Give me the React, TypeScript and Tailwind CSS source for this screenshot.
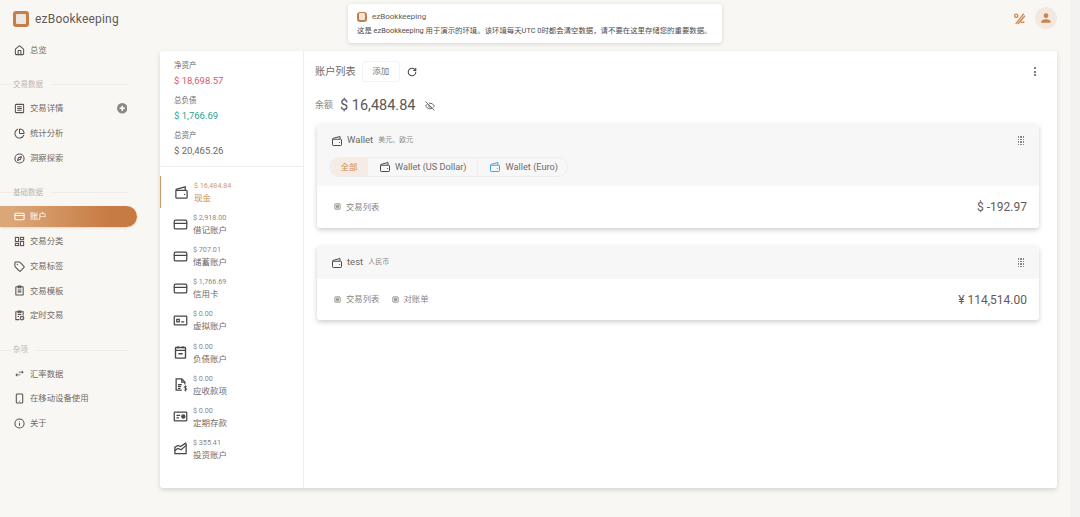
import {
  ChartPie,
  Compass,
  CreditCard,
  EyeOff,
  House,
  Info,
  RotateCw,
  Smartphone,
  Tag,
} from "lucide-react";

const FONT = "font-['Roboto','Noto_Sans_CJK_SC',sans-serif]";

type IconProps = { className?: string };

function WalletIcon({ className }: IconProps) {
  return (
    <svg viewBox="0 0 24 24" fill="none" stroke="currentColor" strokeWidth="2" className={className}>
      <path d="M3 8.500V19.500a1.500 1.500 0 0 0 1.500 1.500h15a1.500 1.500 0 0 0 1.500-1.500V10a1.500 1.500 0 0 0-1.500-1.500H3" />
      <path d="M3 8.500c0-1 .6-1.600 1.500-1.900L18 3v5" />
      <circle cx="17" cy="15" r="1.100" fill="currentColor" stroke="none" />
    </svg>
  );
}

function RowsIcon({ className }: IconProps) {
  return (
    <svg viewBox="0 0 24 24" fill="none" stroke="currentColor" strokeWidth="2.200" className={className}>
      <rect x="3" y="3" width="18" height="18" rx="1.500" />
      <path d="M7 8h10M7 12h10M7 16h10" />
    </svg>
  );
}

function GridIcon({ className }: IconProps) {
  return (
    <svg viewBox="0 0 24 24" fill="none" stroke="currentColor" strokeWidth="2.600" className={className}>
      <rect x="3" y="3" width="7" height="9" />
      <rect x="14" y="3" width="7" height="5" />
      <rect x="3" y="16" width="7" height="5" />
      <rect x="14" y="12" width="7" height="9" />
    </svg>
  );
}

function ClipIcon({ className }: IconProps) {
  return (
    <svg viewBox="0 0 24 24" fill="none" stroke="currentColor" strokeWidth="2.200" className={className}>
      <rect x="4" y="4" width="16" height="18" rx="1" />
      <path d="M9 2.500h6V6H9zM8 11h8M8 15h8" />
    </svg>
  );
}

function ScheduleIcon({ className }: IconProps) {
  return (
    <svg viewBox="0 0 24 24" fill="none" stroke="currentColor" strokeWidth="2.200" className={className}>
      <path d="M12 21H4V4h16v8" />
      <path d="M9 2.500h6V6H9zM8 10h8M8 14h3" />
      <circle cx="17.500" cy="17.500" r="4" />
      <path d="M17.500 15.500v2l1.300 1" strokeWidth="1.400" />
    </svg>
  );
}

function SwapIcon({ className }: IconProps) {
  return (
    <svg viewBox="0 0 24 24" fill="currentColor" className={className}>
      <path d="M21 9l-4-4v3h-7v2h7v3l4-4zM3 15l4 4v-3h7v-2H7v-3l-4 4z" />
    </svg>
  );
}

function VirtualIcon({ className }: IconProps) {
  return (
    <svg viewBox="0 0 24 24" fill="none" stroke="currentColor" strokeWidth="2" className={className}>
      <rect x="2" y="5" width="20" height="14" rx="1" />
      <path d="M6 10h4v4H6zM13 14h5" />
    </svg>
  );
}

function DebtIcon({ className }: IconProps) {
  return (
    <svg viewBox="0 0 24 24" fill="none" stroke="currentColor" strokeWidth="2.200" className={className}>
      <rect x="4" y="4" width="16" height="17" rx="1" />
      <path d="M4 8.500h16M8 2v3M16 2v3M8.500 14h7" />
    </svg>
  );
}

function ReceivableIcon({ className }: IconProps) {
  return (
    <svg viewBox="0 0 24 24" fill="none" stroke="currentColor" strokeWidth="2" className={className}>
      <path d="M14 21H5V3h9l5 5v4" />
      <path d="M14 3v5h5M8 12h6M8 15h5M8 18h4" />
      <path d="M22 15h-2.500a1.300 1.300 0 0 0 0 3h1a1.300 1.300 0 0 1 0 3H18M20 13.500V23" strokeWidth="1.500" />
    </svg>
  );
}

function DepositIcon({ className }: IconProps) {
  return (
    <svg viewBox="0 0 24 24" fill="none" stroke="currentColor" strokeWidth="2" className={className}>
      <rect x="2" y="5" width="20" height="14" rx="1" />
      <path d="M5.500 10h6M5.500 14h4" />
      <circle cx="16.500" cy="12" r="2.500" fill="currentColor" />
    </svg>
  );
}

function InvestIcon({ className }: IconProps) {
  return (
    <svg viewBox="0 0 24 24" fill="none" stroke="currentColor" strokeWidth="2" className={className}>
      <path d="M3 9v11h18V4" />
      <path d="M3 15l5-3 5 2 8-7M3 10l5-3 4 2 9-6" />
    </svg>
  );
}

function Logo({ size }: { size: string }) {
  return (
    <span className={`${size} flex items-center justify-center rounded-[3px] bg-[#c67e48]`}>
      <span className="h-[62%] w-[62%] rounded-[1px] bg-[#ebe6e0]" />
    </span>
  );
}

function NavItem({
  icon: Icon,
  label,
  extra,
  active,
}: {
  icon: React.ComponentType<{ className?: string }>;
  label: string;
  extra?: boolean;
  active?: boolean;
}) {
  return (
    <div
      className={`my-[1.600px] flex h-[21.600px] w-[137px] shrink-0 items-center rounded-r-full pl-[14px] pr-[10px] text-[8.400px] ${
        active ? "bg-gradient-to-r from-[#dba678] from-10% to-[#c67b42] to-80% text-white shadow-sm" : "text-[#6f6a66]"
      }`}
    >
      <Icon className={`mr-[5px] h-[11px] w-[11px] shrink-0 [stroke-width:2.300] ${active ? "text-white" : "text-[#57524f]"}`} />
      <span className="flex-1">{label}</span>
      {extra && (
        <svg viewBox="0 0 24 24" className="h-[10.500px] w-[10.500px]">
          <circle cx="12" cy="12" r="12" fill="#8a8785" />
          <path d="M12 6v12M6 12h12" stroke="#ffffff" strokeWidth="3.500" />
        </svg>
      )}
    </div>
  );
}

function NavSection({ label }: { label: string }) {
  return (
    <div className="mb-[1.500px] mt-[12px] flex h-[20px] w-[128px] shrink-0 items-center">
      <span className="h-px w-[12px] bg-[#f0ede9]" />
      <span className="px-[1px] text-[7.500px] text-[#b9b6b2]">{label}</span>
      <span className="ml-[6px] h-px flex-1 bg-[#f0ede9]" />
    </div>
  );
}

function Sidebar() {
  return (
    <aside className="flex w-[160px] shrink-0 flex-col">
      <div className="flex h-[38px] shrink-0 items-center pl-[13px]">
        <Logo size="h-[16px] w-[16px]" />
        <span className="ml-[6px] text-[12px] tracking-[0.2px] text-[#5f5b58]">ezBookkeeping</span>
      </div>
      <NavItem icon={House} label="总览" />
      <NavSection label="交易数据" />
      <NavItem icon={RowsIcon} label="交易详情" extra />
      <NavItem icon={ChartPie} label="统计分析" />
      <NavItem icon={Compass} label="洞察探索" />
      <NavSection label="基础数据" />
      <NavItem icon={CreditCard} label="账户" active />
      <NavItem icon={GridIcon} label="交易分类" />
      <NavItem icon={Tag} label="交易标签" />
      <NavItem icon={ClipIcon} label="交易模板" />
      <NavItem icon={ScheduleIcon} label="定时交易" />
      <NavSection label="杂项" />
      <NavItem icon={SwapIcon} label="汇率数据" />
      <NavItem icon={Smartphone} label="在移动设备使用" />
      <NavItem icon={Info} label="关于" />
    </aside>
  );
}

const SUMMARY = [
  { label: "净资产", value: "$ 18,698.57", color: "text-[#d9596a]" },
  { label: "总负债", value: "$ 1,766.69", color: "text-[#2ba58f]" },
  { label: "总资产", value: "$ 20,465.26", color: "text-[#6b6764]" },
];

const ACCOUNT_TYPES = [
  { icon: WalletIcon, amount: "$ 16,484.84", name: "现金", active: true },
  { icon: CreditCard, amount: "$ 2,918.00", name: "借记账户" },
  { icon: CreditCard, amount: "$ 707.01", name: "储蓄账户" },
  { icon: CreditCard, amount: "$ 1,766.69", name: "信用卡" },
  { icon: VirtualIcon, amount: "$ 0.00", name: "虚拟账户" },
  { icon: DebtIcon, amount: "$ 0.00", name: "负债账户" },
  { icon: ReceivableIcon, amount: "$ 0.00", name: "应收款项" },
  { icon: DepositIcon, amount: "$ 0.00", name: "定期存款" },
  { icon: InvestIcon, amount: "$ 355.41", name: "投资账户" },
];

function TypeColumn() {
  return (
    <div className="w-[144px] shrink-0 border-r border-[#eeeeee]">
      <div className="h-[116px] border-b border-[#eeeeee] pl-[14px] pt-[9px]">
        {SUMMARY.map((s) => (
          <div key={s.label} className="h-[35px]">
            <div className="text-[7.500px] leading-[12px] text-[#6f6b68]">{s.label}</div>
            <div className={`mt-[1px] text-[9.500px] leading-[15px] ${s.color}`}>{s.value}</div>
          </div>
        ))}
      </div>
      <div className="pt-[9px]">
        {ACCOUNT_TYPES.map((t) => {
          const Icon = t.icon;
          return (
            <div
              key={t.name}
              className={`flex h-[32.100px] items-center pl-[13px] ${
                t.active ? "border-l border-[#d19a6c] pl-[12px]" : ""
              }`}
            >
              <Icon className="h-[15px] w-[15px] shrink-0 text-[#4a4644]" />
              <div className="ml-[5px] pt-[1px]">
                <div className={`text-[7.200px] leading-[10px] ${t.active ? "text-[#d19a6c]" : "text-[#8b8784]"}`}>
                  {t.amount}
                </div>
                <div className={`mt-[2px] text-[8.500px] leading-[11px] ${t.active ? "text-[#c98a57]" : "text-[#6f6b68]"}`}>
                  {t.name}
                </div>
              </div>
            </div>
          );
        })}
      </div>
    </div>
  );
}

function DragDots() {
  return (
    <span className="grid grid-cols-3 gap-[1px]">
      {Array.from({ length: 12 }, (_, i) => (
        <span key={i} className="h-[1.500px] w-[1.500px] bg-[#8a8683]" />
      ))}
    </span>
  );
}

function CardLink({ label }: { label: string }) {
  return (
    <span className="flex items-center text-[8.400px] text-[#8a8683]">
      <RowsIcon className="mr-[5px] h-[7px] w-[7px] text-[#77736f] [stroke-width:2.600]" />
      {label}
    </span>
  );
}

function AccountCard({
  name,
  currency,
  amount,
  tabs,
  links,
  bodyClass,
}: {
  name: string;
  currency: string;
  amount: string;
  tabs?: boolean;
  links: string[];
  bodyClass: string;
}) {
  return (
    <div className="overflow-hidden rounded-[3px] bg-white shadow-[0_2px_5px_rgba(0,0,0,0.2)]">
      <div className="bg-[#f7f7f7] px-[14px]">
        <div className="flex h-[33px] items-center">
          <WalletIcon className="h-[12px] w-[12px] text-[#4f4b48]" />
          <span className="ml-[4px] text-[9.500px] text-[#6b6764]">{name}</span>
          <span className="ml-[5px] text-[7px] text-[#8f8b88]">{currency}</span>
          <span className="ml-auto pr-[1px]">
            <DragDots />
          </span>
        </div>
        {tabs && (
          <div className="-ml-[2px] flex h-[29px] items-start">
            <div className="flex h-[20px] items-center rounded-full border border-[#eeeeee] text-[9.200px] text-[#6f6b68]">
              <span className="flex h-full w-[38px] items-center justify-center rounded-l-full bg-[#f4ece5] text-[8.500px] text-[#d08a55]">
                全部
              </span>
              <span className="flex h-full items-center border-r border-[#eeeeee] pl-[11px] pr-[10px]">
                <WalletIcon className="mr-[4px] h-[12px] w-[12px] text-[#4f4b48]" />
                Wallet (US Dollar)
              </span>
              <span className="flex h-full items-center pl-[11px] pr-[9px]">
                <WalletIcon className="mr-[5px] h-[12px] w-[12px] text-[#45a4e6]" />
                Wallet (Euro)
              </span>
            </div>
          </div>
        )}
      </div>
      <div className={`flex items-center justify-between pl-[17px] pr-[12px] ${bodyClass}`}>
        <div className="flex gap-[12px]">
          {links.map((l) => (
            <CardLink key={l} label={l} />
          ))}
        </div>
        <span className="text-[12px] text-[#5f5b58]">{amount}</span>
      </div>
    </div>
  );
}

function AccountColumn() {
  return (
    <div className="min-w-0 flex-1 pl-[11px] pr-[18px] pt-[10px]">
      <div className="flex h-[21px] items-center">
        <span className="text-[10.200px] text-[#6f6b68]">账户列表</span>
        <span className="ml-[6px] flex h-[21px] w-[38px] items-center justify-center rounded-[3px] border border-[#f3f3f3] text-[8.500px] text-[#7b7774]">
          添加
        </span>
        <RotateCw className="ml-[7px] h-[10px] w-[10px] text-[#4f4b48] [stroke-width:2.600]" />
        <span className="ml-auto flex flex-col gap-[1.500px] pr-[3px]">
          <span className="h-[2px] w-[2px] rounded-full bg-[#555555]" />
          <span className="h-[2px] w-[2px] rounded-full bg-[#555555]" />
          <span className="h-[2px] w-[2px] rounded-full bg-[#555555]" />
        </span>
      </div>
      <div className="mt-[13px] flex h-[22px] items-center">
        <span className="text-[9px] text-[#8a8683]">余额</span>
        <span className="ml-[7px] text-[14.500px] text-[#5b5754]">$ 16,484.84</span>
        <EyeOff className="ml-[10px] h-[10px] w-[10px] text-[#6f6b68] [stroke-width:2.400]" />
      </div>
      <div className="ml-[2px] mt-[7px] flex flex-col gap-[18px]">
        <AccountCard
          name="Wallet"
          currency="美元、欧元"
          amount="$ -192.97"
          tabs
          links={["交易列表"]}
          bodyClass="h-[42px]"
        />
        <AccountCard
          name="test"
          currency="人民币"
          amount="¥ 114,514.00"
          links={["交易列表", "对账单"]}
          bodyClass="h-[41px]"
        />
      </div>
    </div>
  );
}

export default function App() {
  return (
    <div className={`relative flex h-[517px] w-[1080px] overflow-hidden bg-[#f9f7f4] ${FONT}`}>
      <Sidebar />
      <main className="min-w-0 flex-1">
        <header className="flex h-[51px] items-start justify-end pr-[13px] pt-[7px]">
          <svg viewBox="0 0 24 24" fill="none" stroke="#cd8a55" strokeWidth="2.600" className="mr-[9px] mt-[5px] h-[13px] w-[13px]">
            <path d="M5 22L20 3M9 22L22 7" />
            <circle cx="6" cy="7" r="3" />
            <path d="M14 19h7" />
          </svg>
          <span className="flex h-[22px] w-[22px] items-center justify-center rounded-full bg-[#f3e8df]">
            <svg viewBox="0 0 24 24" fill="#c9854f" className="h-[14px] w-[14px]">
              <path d="M12,4A4,4 0 0,1 16,8A4,4 0 0,1 12,12A4,4 0 0,1 8,8A4,4 0 0,1 12,4M12,14C16.420,14 20,15.790 20,18V20H4V18C4,15.790 7.580,14 12,14Z" />
            </svg>
          </span>
        </header>
        <div className="mr-[13px] flex h-[437px] rounded-[3px] bg-white shadow-[0_2px_5px_rgba(0,0,0,0.14)]">
          <TypeColumn />
          <AccountColumn />
        </div>
      </main>
      <div className="w-[10px] bg-[#f3f2f0]" />

      {/* demo notice floating over the top of the page */}
      <div className="absolute left-[348px] top-[4px] h-[39px] w-[374px] rounded-[4px] bg-white px-[9px] pt-[7px] shadow-[0_1px_4px_rgba(0,0,0,0.14)]">
        <div className="flex items-center">
          <Logo size="h-[10px] w-[10px]" />
          <span className="ml-[5px] text-[8px] leading-[11px] text-[#5f5b58]">ezBookkeeping</span>
        </div>
        <div className="mt-[3px] whitespace-nowrap text-[7.400px] leading-[11px] text-[#4f4b48]">
          这是 ezBookkeeping 用于演示的环境。该环境每天UTC 0时都会清空数据，请不要在这里存储您的重要数据。
        </div>
      </div>
    </div>
  );
}
